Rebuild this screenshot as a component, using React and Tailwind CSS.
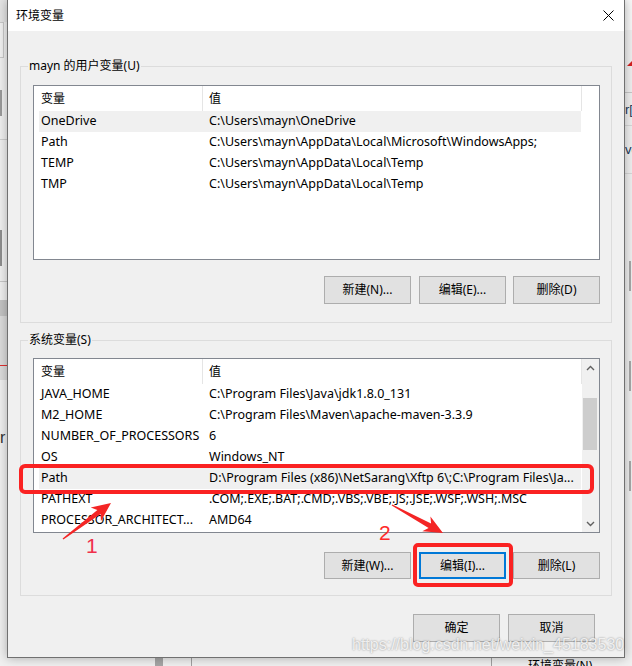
import React from "react";

const userRows = [
  ["OneDrive", "C:\\Users\\mayn\\OneDrive", true],
  ["Path", "C:\\Users\\mayn\\AppData\\Local\\Microsoft\\WindowsApps;"],
  ["TEMP", "C:\\Users\\mayn\\AppData\\Local\\Temp"],
  ["TMP", "C:\\Users\\mayn\\AppData\\Local\\Temp"],
];

const sysRows = [
  ["JAVA_HOME", "C:\\Program Files\\Java\\jdk1.8.0_131"],
  ["M2_HOME", "C:\\Program Files\\Maven\\apache-maven-3.3.9"],
  ["NUMBER_OF_PROCESSORS", "6"],
  ["OS", "Windows_NT"],
  ["Path", "D:\\Program Files (x86)\\NetSarang\\Xftp 6\\;C:\\Program Files\\Ja...", true],
  ["PATHEXT", ".COM;.EXE;.BAT;.CMD;.VBS;.VBE;.JS;.JSE;.WSF;.WSH;.MSC"],
  ["PROCESSOR_ARCHITECT...", "AMD64"],
];

function Btn({ label, focused }) {
  return (
    <div
      className={
        focused
          ? "w-[87px] h-full flex items-center justify-center bg-[#e1e1e1] border-2 border-[#0078d7] text-[12px] text-black"
          : "w-[87px] h-full flex items-center justify-center bg-[#e1e1e1] border border-[#adadad] text-[12px] text-black"
      }
    >
      {label}
    </div>
  );
}

function Header() {
  return (
    <div className="h-[25px] flex text-[12px] text-black">
      <div className="w-[169px] h-full pl-[7px] flex items-center border-r border-[#e5e5e5]">变量</div>
      <div className="w-[379px] h-full pl-[6px] flex items-center border-r border-[#e5e5e5]">值</div>
    </div>
  );
}

function Row({ name, value, selected }) {
  return (
    <div
      className={
        selected
          ? "h-[21px] ml-[5px] w-[542px] flex items-center bg-[#f0f0f0] text-[12.5px] text-black"
          : "h-[21px] ml-[5px] w-[542px] flex items-center text-[12.5px] text-black"
      }
    >
      <div className="w-[163px] pl-[2px] whitespace-nowrap overflow-hidden">{name}</div>
      <div className="flex-1 pl-[7px] whitespace-nowrap overflow-hidden">{value}</div>
    </div>
  );
}

function Chevron({ up }) {
  return (
    <svg width="9" height="6" viewBox="0 0 9 6">
      <path
        d={up ? "M1 5 L4.5 1.5 L8 5" : "M1 1 L4.5 4.5 L8 1"}
        fill="none"
        stroke="#606060"
        strokeWidth="1.4"
      />
    </svg>
  );
}

function arrow(tx, ty, hx, hy) {
  const dx = hx - tx;
  const dy = hy - ty;
  const len = Math.hypot(dx, dy);
  const ux = dx / len;
  const uy = dy / len;
  const px = -uy;
  const py = ux;
  const headLen = 19;
  const headW = 8.5;
  const shaftW = 2.6;
  const tailW = 0.6;
  const bx = hx - ux * headLen;
  const by = hy - uy * headLen;
  const nx = bx + ux * 4;
  const ny = by + uy * 4;
  const pts = [
    [tx + px * tailW, ty + py * tailW],
    [nx + px * shaftW, ny + py * shaftW],
    [bx + px * headW, by + py * headW],
    [hx, hy],
    [bx - px * headW, by - py * headW],
    [nx - px * shaftW, ny - py * shaftW],
    [tx - px * tailW, ty - py * tailW],
  ];
  return pts.map((p) => p[0].toFixed(1) + "," + p[1].toFixed(1)).join(" ");
}

function LeftStrip() {
  return (
    <div className="w-[7px] h-full shrink-0 flex flex-col bg-[#f0f0f0]">
      <div className="h-[22px] bg-[#e4e4e4]" />
      <div className="h-[36px] w-[4px] border-r border-y border-[#c9c9c9] bg-[#f2f2f2]" />
      <div className="h-[32px]" />
      <div className="h-[26px] w-[2px] bg-[#9a9a9a]" />
      <div className="h-[24px] border-b border-[#cfcfcf]" />
      <div className="h-[90px]" />
      <div className="h-[36px] w-[2px] bg-[#8e8e8e]" />
      <div className="h-[16px] border-b border-[#c8c8c8]" />
      <div className="h-[18px]" />
      <div className="h-[16px] bg-[#c4c4c4]" />
      <div className="h-[49px] bg-[#dcdcdc]" />
      <div className="h-[1px] bg-[#e03030]" />
      <div className="h-[14px] bg-[#dcdcdc]" />
      <div className="h-[50px]" />
      <div className="text-[16px] leading-none text-[#333] font-['Liberation_Sans',sans-serif]">r</div>
    </div>
  );
}

function RightStrip() {
  return (
    <div className="w-[7px] h-full shrink-0 flex flex-col bg-[#f0f0f0] overflow-hidden">
      <div className="h-[30px] bg-[#f8f8f8]" />
      <div className="h-[31px]" />
      <div className="h-[5px] pl-[2px]">
        <div className="w-0 h-0 border-l-[5px] border-l-transparent border-b-[5px] border-b-[#d42020]" />
      </div>
      <div className="h-[27px] border-b border-[#c8c8c8]" />
      <div className="h-[33px] flex items-center text-[13px] leading-none text-[#1d3a5a] font-['Liberation_Sans',sans-serif] whitespace-nowrap border-b border-[#d8d8d8]">
        r[
      </div>
      <div className="h-[48px] flex items-center text-[13px] leading-none text-[#1d3a5a] font-['Liberation_Sans',sans-serif] whitespace-nowrap border-b border-[#d8d8d8]">
        ve
      </div>
      <div className="h-[87px]" />
      <div className="h-[30px] w-[2px] ml-[4px] bg-[#a8a8a8]" />
      <div className="h-[70px]" />
      <div className="h-[30px] w-[2px] ml-[4px] bg-[#a8a8a8]" />
      <div className="h-[70px]" />
      <div className="h-[30px] w-[2px] ml-[4px] bg-[#a8a8a8]" />
    </div>
  );
}

function BottomStrip() {
  return (
    <div className="h-[8px] shrink-0 flex items-start overflow-hidden">
      <div className="w-[148px]" />
      <div className="w-[8px] h-full bg-[#a6a6a6]" />
      <div className="w-[28px]" />
      <div className="w-[1px] h-full bg-[#a0a0a0]" />
      <div className="w-[299px]" />
      <div className="w-[1px] h-full bg-[#a0a0a0]" />
      <div className="w-[36px]" />
      <div className="text-[12px] leading-[14px] text-black whitespace-nowrap pt-[1px]">环境变量(N)...</div>
    </div>
  );
}

function GroupLabel({ children }) {
  return (
    <div className="absolute left-[7px] top-[-10px] px-[1px] bg-[#f0f0f0] text-[12px] leading-[18px] text-black">
      {children}
    </div>
  );
}

export default function App() {
  return (
    <div className="relative w-[632px] h-[666px] overflow-hidden flex bg-[#f0f0f0] font-['Noto_Sans','Noto_Sans_CJK_SC',sans-serif]">
      <LeftStrip />

      <div className="w-[618px] h-full shrink-0 flex flex-col">
        {/* dialog window */}
        <div className="relative z-10 h-[658px] shrink-0 flex flex-col bg-[#f0f0f0] border-x border-b border-[#707070] shadow-[0_0_10px_rgba(0,0,0,0.3)]">
          <div className="h-[31px] shrink-0 bg-white flex items-center justify-between pl-[8px] pr-[10px]">
            <span className="text-[12px] text-black">环境变量</span>
            <svg width="11" height="11" viewBox="0 0 11 11">
              <path d="M0.5 0.5 L10.5 10.5 M10.5 0.5 L0.5 10.5" stroke="#000" strokeWidth="1" />
            </svg>
          </div>

          <div className="flex flex-col px-[12px] pt-[35px]">
            {/* user variables */}
            <div className="relative h-[257px] border border-[#dcdcdc] pt-[18px] pl-[12px]">
              <GroupLabel>mayn 的用户变量(U)</GroupLabel>
              <div className="w-[567px] h-[175px] border border-[#828790] bg-white overflow-hidden">
                <Header />
                {userRows.map((r) => (
                  <Row key={r[0]} name={r[0]} value={r[1]} selected={r[2]} />
                ))}
              </div>
              <div className="w-[567px] h-[28px] mt-[16px] flex justify-end">
                <Btn label="新建(N)..." />
                <div className="w-[8px]" />
                <Btn label="编辑(E)..." />
                <div className="w-[7px]" />
                <Btn label="删除(D)" />
              </div>
            </div>

            {/* system variables */}
            <div className="relative h-[256px] mt-[17px] border border-[#dcdcdc] pt-[17px] pl-[12px]">
              <GroupLabel>系统变量(S)</GroupLabel>
              <div className="w-[567px] h-[175px] flex border border-[#828790] bg-white overflow-hidden">
                <div className="flex-1 flex flex-col">
                  <Header />
                  {sysRows.map((r) => (
                    <Row key={r[0]} name={r[0]} value={r[1]} selected={r[2]} />
                  ))}
                </div>
                <div className="w-[17px] h-full shrink-0 bg-[#f0f0f0] flex flex-col">
                  <div className="h-[17px] flex items-center justify-center">
                    <Chevron up />
                  </div>
                  <div className="flex-1 pt-[22px] pl-[1px]">
                    <div className="w-[14px] h-[52px] bg-[#cdcdcd]" />
                  </div>
                  <div className="h-[17px] flex items-center justify-center">
                    <Chevron />
                  </div>
                </div>
              </div>
              <div className="w-[567px] h-[27px] mt-[19px] flex justify-end">
                <Btn label="新建(W)..." />
                <div className="w-[8px]" />
                <Btn label="编辑(I)..." focused />
                <div className="w-[7px]" />
                <Btn label="删除(L)" />
              </div>
            </div>

            {/* OK / Cancel */}
            <div className="h-[28px] mt-[18px] pr-[17px] flex justify-end gap-[8px]">
              <Btn label="确定" />
              <Btn label="取消" />
            </div>
          </div>
        </div>
        <BottomStrip />
      </div>

      <RightStrip />

      {/* red annotations drawn over the screenshot */}
      <svg className="absolute inset-0 z-20 pointer-events-none" width="632" height="666" viewBox="0 0 632 666">
        <rect x="21" y="466" width="571" height="26" rx="4" fill="none" stroke="#fa2222" strokeWidth="4" />
        <rect x="415" y="545" width="96" height="40" rx="3" fill="none" stroke="#fa2222" strokeWidth="4" />
        <polygon points={arrow(63, 539, 111, 503)} fill="#f42525" />
        <polygon points={arrow(392, 505, 443, 533)} fill="#f42525" />
      </svg>
      <div className="absolute z-20 left-[86px] top-[535px] text-[21px] leading-none text-[#f0304c] font-['Liberation_Sans',sans-serif]">1</div>
      <div className="absolute z-20 left-[379px] top-[522px] text-[21px] leading-none text-[#ff2a2a] font-['Liberation_Sans',sans-serif]">2</div>

      {/* watermark */}
      <div className="absolute z-20 left-[352px] top-[637px] text-[16px] leading-none whitespace-nowrap text-white/80 font-['Liberation_Sans',sans-serif] [text-shadow:0_0_2px_rgba(0,0,0,0.45)]">
        https://blog.csdn.net/weixin_45183530
      </div>
    </div>
  );
}
